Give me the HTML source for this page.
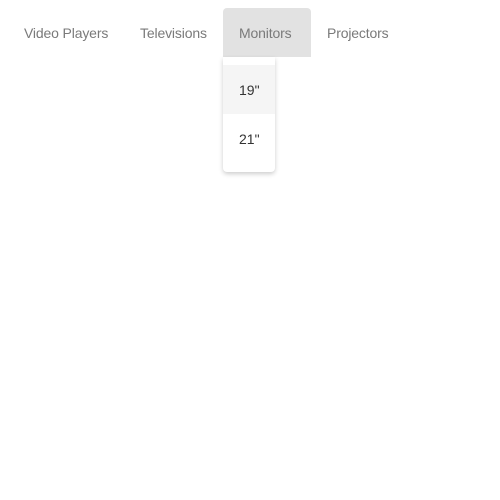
<!DOCTYPE html>
<html><head><style>
body{margin:0;background:#fff;font-family:"Liberation Sans",sans-serif;font-size:14px;}
.tab{position:absolute;top:8px;height:49px;line-height:50px;color:#7a7a7a;padding:0 16px;box-sizing:border-box;letter-spacing:-0.15px;}
.menu{position:absolute;left:223px;top:57px;width:52px;height:115px;background:#fff;border-radius:0 0 4px 4px;box-shadow:0 2px 5px rgba(0,0,0,0.2);}
.item{position:absolute;left:0;width:52px;height:49px;line-height:50px;padding-left:16px;box-sizing:border-box;color:#333;}
</style></head><body>
<div class="tab" style="left:8px">Video Players</div>
<div class="tab" style="left:124px">Televisions</div>
<div class="tab" style="left:223px;width:88px;background:#e2e2e2;border-radius:4px 4px 0 0">Monitors</div>
<div class="tab" style="left:311px">Projectors</div>
<div class="menu">
<div class="item" style="top:8px;background:#f5f5f5">19"</div>
<div class="item" style="top:57px">21"</div>
</div>
</body></html>
